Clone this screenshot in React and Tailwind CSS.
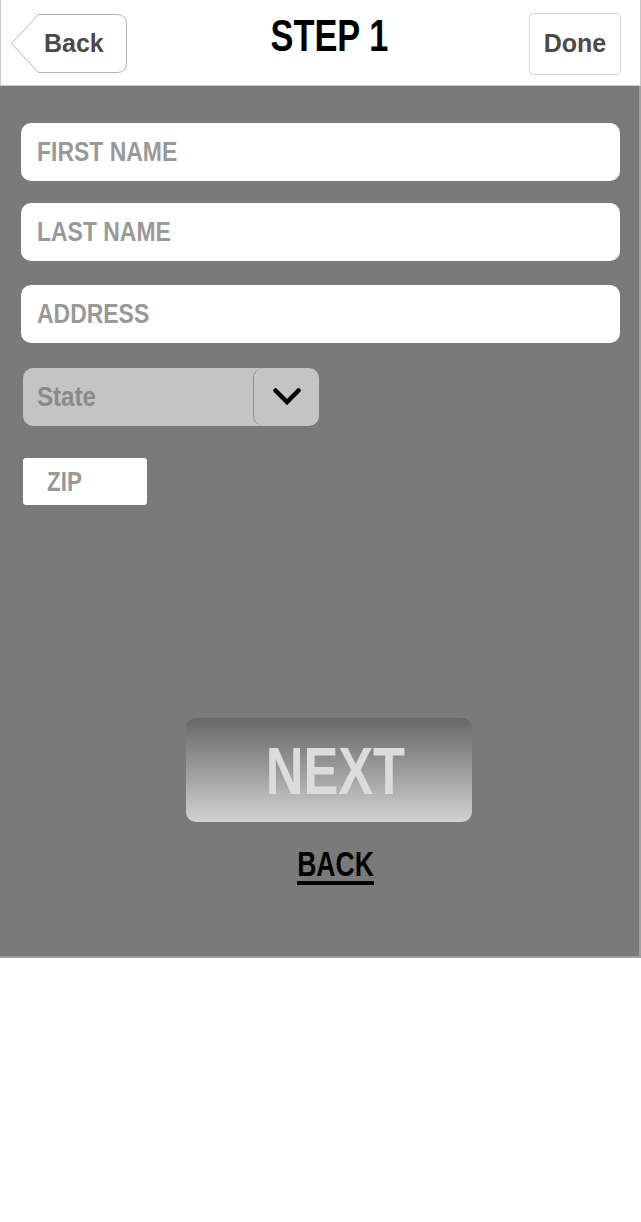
import React from "react";

const helv = { fontFamily: '"Liberation Sans", Arial, sans-serif' };

function Field({ label }) {
  return (
    <div className="h-[58px] rounded-[10px] bg-white flex items-center pl-4">
      <span className="inline-block origin-left scale-x-[0.85] text-[27px] font-bold text-[#999999]" style={helv}>
        {label}
      </span>
    </div>
  );
}

export default function App() {
  return (
    <div className="w-[641px] min-h-[1222px] bg-white">
      {/* Header */}
      <header className="h-[86px] flex items-center justify-between border-l border-r border-b border-[#c8c8c8] pl-[10px] pr-[19px]">
        <button className="relative w-[116px] h-[59px] mt-[2px] text-left">
          <svg width="116" height="59" viewBox="0 0 116 59" className="absolute inset-0">
            <path
              d="M 27.5 0.5 L 106 0.5 Q 115.5 0.5 115.5 10 L 115.5 49 Q 115.5 58.5 106 58.5 L 27.5 58.5 L 0.5 29.5 Z"
              fill="white"
              stroke="#b4b4b4"
              strokeWidth="1"
            />
          </svg>
          <span className="relative block pl-[33px] text-[25px] font-bold text-[#4a4a4a]" style={helv}>
            Back
          </span>
        </button>
        <h1 className="inline-block origin-center scale-x-[0.78] text-[44px] font-bold text-black leading-none -mt-[14px] ml-[2px]" style={helv}>
          STEP 1
        </h1>
        <button className="w-[92px] h-[62px] mt-[3px] rounded-[4px] border border-[#d4d4d4] flex items-center justify-center">
          <span className="text-[25px] font-bold text-[#4a4a4a]" style={helv}>
            Done
          </span>
        </button>
      </header>

      {/* Form panel */}
      <main className="h-[872px] bg-[#7a7a7a] border-r-2 border-b-2 border-[#a0a0a0] flex flex-col pt-[37px] pl-[21px] pr-[19px]">
        <div className="flex flex-col gap-[22px]">
          <Field label="FIRST NAME" />
          <Field label="LAST NAME" />
          <div className="mt-[2px]">
            <Field label="ADDRESS" />
          </div>
        </div>

        <div className="mt-[25px] ml-[2px] w-[296px] h-[58px] rounded-[10px] bg-[#c4c4c4] flex items-center">
          <span className="flex-1 pl-[14px]">
            <span className="inline-block origin-left scale-x-[0.86] text-[28px] font-bold text-[#8a8a8a]" style={helv}>
              State
            </span>
          </span>
          <div className="w-[66px] h-full rounded-[10px] border-l border-[#8e8e8e] flex items-center justify-center">
            <svg width="28" height="18" viewBox="0 0 28 18">
              <path d="M2.5 2.5 L14 14 L25.5 2.5" fill="none" stroke="black" strokeWidth="4.5" strokeLinecap="round" strokeLinejoin="miter" />
            </svg>
          </div>
        </div>

        <div className="mt-[32px] ml-[2px] w-[124px] h-[47px] rounded-[3px] bg-white flex items-center pl-[24px]">
          <span className="inline-block origin-left scale-x-[0.8] text-[28px] font-bold text-[#999999]" style={helv}>
            ZIP
          </span>
        </div>

        <div className="flex flex-col items-center mt-[213px] pl-[16px]">
          <button className="w-[286px] h-[104px] rounded-[10px] bg-gradient-to-b from-[#686868] to-[#d2d2d2] flex items-center justify-center">
            <span className="inline-block origin-center scale-x-[0.78] ml-[13px] text-[67px] font-bold text-[#dcdcdc] leading-none" style={helv}>
              NEXT
            </span>
          </button>
          <a className="mt-[24px] ml-[14px] inline-block origin-center scale-x-[0.76] text-[35px] font-bold text-black leading-none underline decoration-[4px] underline-offset-[5px]" style={helv}>
            BACK
          </a>
        </div>
      </main>
    </div>
  );
}
